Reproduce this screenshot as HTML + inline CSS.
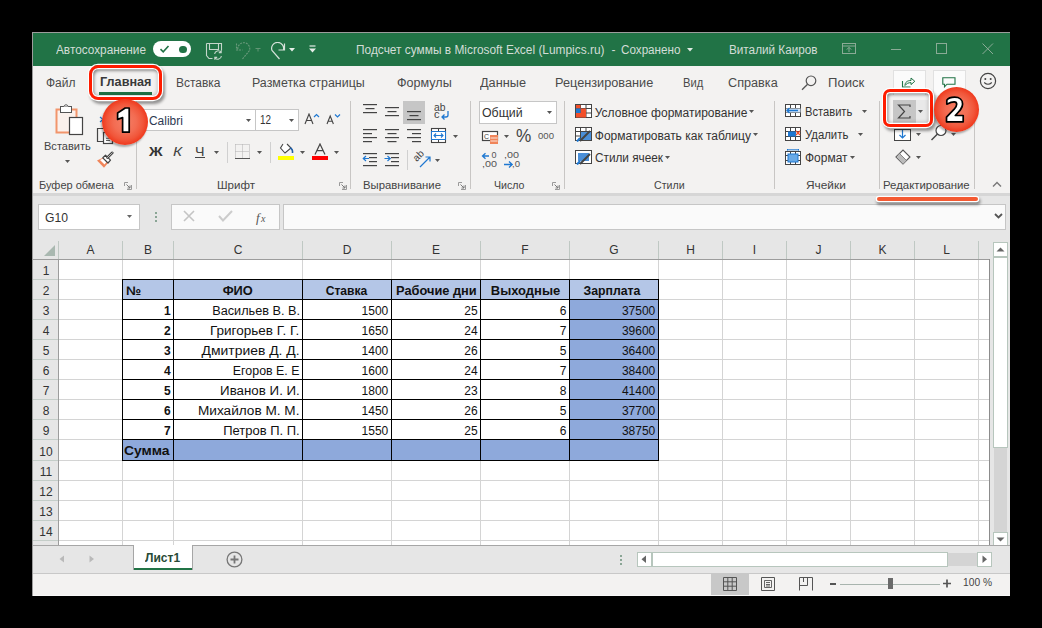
<!DOCTYPE html>
<html><head><meta charset="utf-8"><style>
html,body{margin:0;padding:0;width:1042px;height:628px;overflow:hidden;background:#000;font-family:"Liberation Sans", sans-serif;}
</style></head><body>
<div style="position:relative;width:1042px;height:628px;overflow:hidden;">
<div style="position:absolute;left:32px;top:32px;width:978px;height:564px;background:#9c9c9c;"></div>
<div style="position:absolute;left:33px;top:33px;width:977px;height:34px;background:#217346;"></div>
<div style="position:absolute;left:33px;top:66px;width:977px;height:127px;background:#f3f2f1;"></div>
<div style="position:absolute;left:33px;top:193px;width:977px;height:48px;background:#e6e6e6;"></div>
<div style="position:absolute;left:33px;top:193px;width:977px;height:3px;background:#d6d6d6;"></div>
<div style="position:absolute;left:33px;top:241px;width:977px;height:304px;background:#e6e6e6;"></div>
<div style="position:absolute;left:33px;top:545px;width:977px;height:28px;background:#e6e6e6;"></div>
<div style="position:absolute;left:33px;top:573px;width:977px;height:23px;background:#f3f2f1;"></div>
<div style="position:absolute;left:33px;top:595px;width:977px;height:1px;background:#f8f8f8;"></div>
<span style="position:absolute;left:56.00px;top:43.84px;font-size:12px;line-height:12px;font-weight:400;color:#d3ddd7;white-space:pre;transform:scaleX(0.9838);transform-origin:left;">Автосохранение</span>
<div style="position:absolute;left:153px;top:41px;width:38px;height:16px;background:#fff;border-radius:8px;"></div>
<svg style="position:absolute;left:159px;top:44px;" width="11" height="10" viewBox="0 0 11 10"><path d="M1.5 5.2 L4.2 7.8 L9.5 2" stroke="#217346" stroke-width="1.6" fill="none"/></svg>
<div style="position:absolute;left:179px;top:45.5px;width:7.5px;height:7.5px;background:#217346;border-radius:50%;"></div>
<svg style="position:absolute;left:205px;top:42px;" width="18" height="18" viewBox="0 0 18 18"><path d="M1.5 1.5 H16.5 V8.5 M1.5 1.5 V13.5 L4 16.5 H7.5" stroke="#c5d6cb" stroke-width="1.1" fill="none"/><path d="M4.5 1.5 V7.5 H13.5 V1.5" stroke="#c5d6cb" stroke-width="1.1" fill="none"/><path d="M9.6 12 A3.6 3.6 0 0 1 16 10.2 M16.4 14 A3.6 3.6 0 0 1 10 15.8 M16.2 8.2 V10.6 H13.8 M9.8 17.8 V15.4 H12.2" stroke="#c5d6cb" stroke-width="1.1" fill="none"/></svg>
<svg style="position:absolute;left:234px;top:42px;" width="18" height="18" viewBox="0 0 18 18"><path d="M8.5 17 L15.5 8.5 A6 6 0 1 0 4 8.3 M2.5 1.5 V8 H8.5" stroke="#6a9a7c" stroke-width="1.1" fill="none" stroke-dasharray="2 1"/></svg>
<svg style="position:absolute;left:255px;top:47.5px;" width="6" height="4" viewBox="0 0 6 4"><path d="M0.5 0.5 H5.5 M3 0.5 V3.5" stroke="#6a9a7c" stroke-width="0.9"/></svg>
<svg style="position:absolute;left:269px;top:42px;" width="18" height="18" viewBox="0 0 18 18"><path d="M10.5 17 L3 8.5 A6 6 0 1 1 14.3 8.3 M15.5 1.5 V8 H9.5" stroke="#d6e2da" stroke-width="1.2" fill="none"/></svg>
<svg style="position:absolute;left:289px;top:48px;" width="7" height="4" viewBox="0 0 7 4"><path d="M0 0 H6 L3 3.5 Z" fill="#e6eee9"/></svg>
<svg style="position:absolute;left:309px;top:45px;" width="7" height="8" viewBox="0 0 7 8"><path d="M0.5 1 H6.5" stroke="#e6eee9" stroke-width="1.2"/><path d="M0 3.5 H7 L3.5 7.5 Z" fill="#e6eee9"/></svg>
<span style="position:absolute;left:355.50px;top:43.84px;font-size:12px;line-height:12px;font-weight:400;color:#d3ddd7;white-space:pre;transform:scaleX(0.9913);transform-origin:left;">Подсчет суммы в Microsoft Excel (Lumpics.ru)</span>
<span style="position:absolute;left:611.50px;top:43.84px;font-size:12px;line-height:12px;font-weight:400;color:#d3ddd7;white-space:pre;">-</span>
<span style="position:absolute;left:621.00px;top:43.84px;font-size:12px;line-height:12px;font-weight:400;color:#d3ddd7;white-space:pre;transform:scaleX(0.9729);transform-origin:left;">Сохранено</span>
<svg style="position:absolute;left:687px;top:48px;" width="7" height="4" viewBox="0 0 7 4"><path d="M0 0 H6 L3 3.5 Z" fill="#dfeae3"/></svg>
<span style="position:absolute;left:728.50px;top:43.84px;font-size:12px;line-height:12px;font-weight:400;color:#d3ddd7;white-space:pre;transform:scaleX(0.9771);transform-origin:left;">Виталий Каиров</span>
<svg style="position:absolute;left:842px;top:43px;" width="15" height="12" viewBox="0 0 15 12"><rect x="0.5" y="0.5" width="13" height="10" stroke="#8aab96" fill="none"/><path d="M0.5 3 H13.5" stroke="#8aab96"/><path d="M7 9 V4.5 M4.8 6.6 L7 4.3 L9.2 6.6" stroke="#8aab96" fill="none"/></svg>
<div style="position:absolute;left:891px;top:49px;width:10px;height:1px;background:#8aab96;"></div>
<svg style="position:absolute;left:936px;top:43px;" width="12" height="12" viewBox="0 0 12 12"><rect x="0.5" y="0.5" width="10" height="10" stroke="#8aab96" fill="none"/></svg>
<svg style="position:absolute;left:982px;top:43px;" width="12" height="12" viewBox="0 0 12 12"><path d="M0.5 0.5 L11 11 M11 0.5 L0.5 11" stroke="#8aab96" stroke-width="1"/></svg>
<span style="position:absolute;left:45.50px;top:76.62px;font-size:12.5px;line-height:12.5px;font-weight:400;color:#4a4a4a;white-space:pre;transform:scaleX(0.9598);transform-origin:left;">Файл</span>
<span style="position:absolute;left:99.50px;top:76.42px;font-size:12.5px;line-height:12.5px;font-weight:700;color:#3a3a3a;white-space:pre;transform:scaleX(1.0129);transform-origin:left;">Главная</span>
<div style="position:absolute;left:99px;top:92px;width:53px;height:3px;background:#217346;"></div>
<span style="position:absolute;left:176.00px;top:76.62px;font-size:12.5px;line-height:12.5px;font-weight:400;color:#4a4a4a;white-space:pre;transform:scaleX(0.9576);transform-origin:left;">Вставка</span>
<span style="position:absolute;left:251.50px;top:76.62px;font-size:12.5px;line-height:12.5px;font-weight:400;color:#4a4a4a;white-space:pre;transform:scaleX(0.9938);transform-origin:left;">Разметка страницы</span>
<span style="position:absolute;left:396.50px;top:76.62px;font-size:12.5px;line-height:12.5px;font-weight:400;color:#4a4a4a;white-space:pre;transform:scaleX(1.0054);transform-origin:left;">Формулы</span>
<span style="position:absolute;left:479.80px;top:76.62px;font-size:12.5px;line-height:12.5px;font-weight:400;color:#4a4a4a;white-space:pre;transform:scaleX(1.0183);transform-origin:left;">Данные</span>
<span style="position:absolute;left:555.40px;top:76.62px;font-size:12.5px;line-height:12.5px;font-weight:400;color:#4a4a4a;white-space:pre;transform:scaleX(1.0183);transform-origin:left;">Рецензирование</span>
<span style="position:absolute;left:682.50px;top:76.62px;font-size:12.5px;line-height:12.5px;font-weight:400;color:#4a4a4a;white-space:pre;transform:scaleX(0.8972);transform-origin:left;">Вид</span>
<span style="position:absolute;left:728.00px;top:76.62px;font-size:12.5px;line-height:12.5px;font-weight:400;color:#4a4a4a;white-space:pre;transform:scaleX(1.0133);transform-origin:left;">Справка</span>
<svg style="position:absolute;left:801px;top:75px;" width="16" height="16" viewBox="0 0 16 16"><circle cx="10" cy="5.8" r="4.8" stroke="#555" stroke-width="1.2" fill="none"/><path d="M6.6 9.2 L1 14.8" stroke="#555" stroke-width="1.3"/></svg>
<span style="position:absolute;left:828.00px;top:76.62px;font-size:12.5px;line-height:12.5px;font-weight:400;color:#4a4a4a;white-space:pre;transform:scaleX(1.0479);transform-origin:left;">Поиск</span>
<div style="position:absolute;left:893px;top:70px;width:31px;height:24px;background:#fbfbfb;border:1px solid #e1e1e1;border-bottom:none;"></div>
<svg style="position:absolute;left:901px;top:76px;" width="15" height="12" viewBox="0 0 15 12"><path d="M1.5 5 V11 H9.5" stroke="#217346" stroke-width="1.1" fill="none"/><path d="M4 9.5 C4 6 6.5 4.5 10 4.5 V2 L13.8 5.3 L10 8.6 V6.6 C7.5 6.6 5.5 7.5 4 9.5Z" stroke="#217346" stroke-width="1" fill="none"/></svg>
<div style="position:absolute;left:933px;top:70px;width:31px;height:24px;background:#fbfbfb;border:1px solid #e1e1e1;border-bottom:none;"></div>
<svg style="position:absolute;left:942px;top:77px;" width="14" height="11" viewBox="0 0 14 11"><path d="M0.8 0.8 H13 V7.2 H5 L2.5 9.8 V7.2 H0.8 Z" stroke="#217346" stroke-width="1.1" fill="none"/></svg>
<svg style="position:absolute;left:979px;top:72px;" width="18" height="18" viewBox="0 0 18 18"><circle cx="9" cy="9" r="7.6" stroke="#444" stroke-width="1.2" fill="none"/><circle cx="6.3" cy="7" r="1" fill="#444"/><circle cx="11.7" cy="7" r="1" fill="#444"/><path d="M5.2 10.5 Q9 14 12.8 10.5" stroke="#444" stroke-width="1.1" fill="none"/></svg>
<div style="position:absolute;left:136px;top:101px;width:1px;height:88px;background:#c8c6c4;"></div>
<div style="position:absolute;left:350px;top:101px;width:1px;height:88px;background:#c8c6c4;"></div>
<div style="position:absolute;left:470px;top:101px;width:1px;height:88px;background:#c8c6c4;"></div>
<div style="position:absolute;left:564px;top:101px;width:1px;height:88px;background:#c8c6c4;"></div>
<div style="position:absolute;left:774px;top:101px;width:1px;height:88px;background:#c8c6c4;"></div>
<div style="position:absolute;left:879px;top:101px;width:1px;height:88px;background:#c8c6c4;"></div>
<div style="position:absolute;left:974px;top:101px;width:1px;height:88px;background:#c8c6c4;"></div>
<span style="position:absolute;left:39.00px;top:179.69px;font-size:11px;line-height:11px;font-weight:400;color:#444;white-space:pre;">Буфер обмена</span>
<span style="position:absolute;left:217.00px;top:179.69px;font-size:11px;line-height:11px;font-weight:400;color:#444;white-space:pre;transform:scaleX(1.0496);transform-origin:left;">Шрифт</span>
<span style="position:absolute;left:363.00px;top:179.69px;font-size:11px;line-height:11px;font-weight:400;color:#444;white-space:pre;transform:scaleX(1.0301);transform-origin:left;">Выравнивание</span>
<span style="position:absolute;left:494.00px;top:179.69px;font-size:11px;line-height:11px;font-weight:400;color:#444;white-space:pre;transform:scaleX(0.9640);transform-origin:left;">Число</span>
<span style="position:absolute;left:654.00px;top:179.69px;font-size:11px;line-height:11px;font-weight:400;color:#444;white-space:pre;transform:scaleX(0.9652);transform-origin:left;">Стили</span>
<span style="position:absolute;left:805.70px;top:179.69px;font-size:11px;line-height:11px;font-weight:400;color:#444;white-space:pre;transform:scaleX(1.0784);transform-origin:left;">Ячейки</span>
<span style="position:absolute;left:883.30px;top:179.69px;font-size:11px;line-height:11px;font-weight:400;color:#444;white-space:pre;transform:scaleX(1.0346);transform-origin:left;">Редактирование</span>
<svg style="position:absolute;left:124px;top:182px;" width="8" height="8" viewBox="0 0 8 8"><path d="M7.5 3 V7.5 H3 M0.5 4 V0.5 H4" stroke="#9a9a9a" stroke-width="1" fill="none"/><path d="M2.5 2.5 L6 6 M6 3.5 V6 H3.5" stroke="#7a7a7a" stroke-width="1" fill="none"/></svg>
<svg style="position:absolute;left:339px;top:182px;" width="8" height="8" viewBox="0 0 8 8"><path d="M7.5 3 V7.5 H3 M0.5 4 V0.5 H4" stroke="#9a9a9a" stroke-width="1" fill="none"/><path d="M2.5 2.5 L6 6 M6 3.5 V6 H3.5" stroke="#7a7a7a" stroke-width="1" fill="none"/></svg>
<svg style="position:absolute;left:458px;top:182px;" width="8" height="8" viewBox="0 0 8 8"><path d="M7.5 3 V7.5 H3 M0.5 4 V0.5 H4" stroke="#9a9a9a" stroke-width="1" fill="none"/><path d="M2.5 2.5 L6 6 M6 3.5 V6 H3.5" stroke="#7a7a7a" stroke-width="1" fill="none"/></svg>
<svg style="position:absolute;left:552px;top:182px;" width="8" height="8" viewBox="0 0 8 8"><path d="M7.5 3 V7.5 H3 M0.5 4 V0.5 H4" stroke="#9a9a9a" stroke-width="1" fill="none"/><path d="M2.5 2.5 L6 6 M6 3.5 V6 H3.5" stroke="#7a7a7a" stroke-width="1" fill="none"/></svg>
<svg style="position:absolute;left:992px;top:181px;" width="10" height="7" viewBox="0 0 10 7"><path d="M1 5.5 L5 1.5 L9 5.5" stroke="#777" stroke-width="1.4" fill="none"/></svg>
<svg style="position:absolute;left:55px;top:104px;" width="30" height="32" viewBox="0 0 30 32">
<rect x="1.5" y="5.5" width="20" height="23" fill="#fbf1ec" stroke="#f2956c" stroke-width="2"/>
<rect x="5.5" y="2.5" width="11" height="6" fill="#fff" stroke="#555" stroke-width="1"/>
<path d="M8.5 2.5 Q11 -1 13.5 2.5" stroke="#555" stroke-width="1" fill="#fff"/>
<rect x="14.5" y="13.5" width="13" height="17" fill="#fff" stroke="#444" stroke-width="1.2"/>
</svg>
<span style="position:absolute;left:43.80px;top:140.67px;font-size:11.5px;line-height:11.5px;font-weight:400;color:#444;white-space:pre;transform:scaleX(0.9600);transform-origin:left;">Вставить</span>
<svg style="position:absolute;left:65px;top:160px;" width="6" height="4" viewBox="0 0 6 4"><path d="M0 0 H5 L2.5 3 Z" fill="#555"/></svg>
<svg style="position:absolute;left:96px;top:114px;" width="22" height="32" viewBox="0 0 22 32">
<path d="M4 3 L10 8 M10 3 L4 8" stroke="#1f78d1" stroke-width="1.2"/>
<path d="M7.5 27.5 H1.5 V14.5 H8" stroke="#444" stroke-width="1.2" fill="none"/>
<rect x="7.5" y="18.5" width="9" height="11" fill="#fff" stroke="#444" stroke-width="1.2"/>
<path d="M10 24.3 H14 M10 26.5 H14" stroke="#555" stroke-width="0.9"/>
</svg>
<svg style="position:absolute;left:96px;top:151px;" width="18" height="18" viewBox="0 0 18 18">
<path d="M1 9.5 L6.8 6.8 L12 12 L8 16.8 Z" fill="#f0855a"/>
<path d="M4 9 L7 7.5 L10.5 11 L8.5 13.5 Z" fill="#fff"/>
<path d="M6.8 6.8 L9.5 4.2 L14.5 9.2 L12 12 Z" fill="#fff" stroke="#444" stroke-width="1.2" stroke-linejoin="round"/>
<path d="M11.5 6.5 L16.3 1.8" stroke="#444" stroke-width="2.6" stroke-linecap="round"/>
<path d="M11.5 6.5 L16.3 1.8" stroke="#f3f2f1" stroke-width="0.7" stroke-linecap="round"/>
</svg>
<div style="position:absolute;left:141px;top:109px;width:115px;height:22px;background:#fff;border:1px solid #c6c6c6;box-sizing:border-box;"></div>
<div style="position:absolute;left:255px;top:109px;width:44px;height:22px;background:#fff;border:1px solid #c6c6c6;box-sizing:border-box;"></div>
<span style="position:absolute;left:148.50px;top:114.64px;font-size:12px;line-height:12px;font-weight:400;color:#2d3a52;white-space:pre;transform:scaleX(0.9937);transform-origin:left;">Calibri</span>
<svg style="position:absolute;left:246px;top:119px;" width="6" height="4" viewBox="0 0 6 4"><path d="M0 0 H5 L2.5 3 Z" fill="#555"/></svg>
<span style="position:absolute;left:260.00px;top:114.44px;font-size:12px;line-height:12px;font-weight:400;color:#333;white-space:pre;transform:scaleX(0.8234);transform-origin:left;">12</span>
<svg style="position:absolute;left:289px;top:119px;" width="6" height="4" viewBox="0 0 6 4"><path d="M0 0 H5 L2.5 3 Z" fill="#555"/></svg>
<svg style="position:absolute;left:304px;top:113px;" width="20" height="12" viewBox="0 0 20 12"><path d="M1 11 L5 1 L9 11 M2.6 7.5 H7.4" stroke="#444" stroke-width="1.1" fill="none"/><path d="M10 4 L12.5 1.5 L15 4" stroke="#1f78d1" stroke-width="1.2" fill="none"/></svg>
<svg style="position:absolute;left:326px;top:113px;" width="18" height="12" viewBox="0 0 18 12"><path d="M1 11 L4.2 3 L7.4 11 M2.3 8.2 H6.1" stroke="#444" stroke-width="1.1" fill="none"/><path d="M9 1.5 L11.5 4 L14 1.5" stroke="#1f78d1" stroke-width="1.2" fill="none"/></svg>
<span style="position:absolute;left:149.00px;top:144.57px;font-size:13.5px;line-height:13.5px;font-weight:700;color:#333;white-space:pre;transform:scaleX(1.1145);transform-origin:left;">Ж</span>
<span style="position:absolute;left:173.30px;top:145.00px;font-size:13px;line-height:13px;font-weight:400;color:#444;white-space:pre;transform:scaleX(1.1876);transform-origin:left;font-style:italic;">К</span>
<span style="position:absolute;left:195.40px;top:145.00px;font-size:13px;line-height:13px;font-weight:400;color:#444;white-space:pre;transform:scaleX(1.0955);transform-origin:left;">Ч</span>
<div style="position:absolute;left:195px;top:157px;width:10px;height:1px;background:#444;"></div>
<svg style="position:absolute;left:214px;top:151px;" width="6" height="4" viewBox="0 0 6 4"><path d="M0 0 H5 L2.5 3 Z" fill="#555"/></svg>
<div style="position:absolute;left:227px;top:142px;width:1px;height:21px;background:#d0d0d0;"></div>
<svg style="position:absolute;left:235px;top:144px;" width="15" height="15" viewBox="0 0 15 15"><path d="M0.5 0.5 H14.5 V14.5 M0.5 0.5 V14.5 M7.5 0.5 V14 M0.5 7.5 H14.5" stroke="#b0b0b0" stroke-width="1" stroke-dasharray="1 1" fill="none"/><path d="M0 14.5 H15" stroke="#555" stroke-width="1"/></svg>
<svg style="position:absolute;left:257px;top:151px;" width="6" height="4" viewBox="0 0 6 4"><path d="M0 0 H5 L2.5 3 Z" fill="#555"/></svg>
<div style="position:absolute;left:270px;top:142px;width:1px;height:21px;background:#d0d0d0;"></div>
<svg style="position:absolute;left:279px;top:143px;" width="16" height="12" viewBox="0 0 16 12"><path d="M4 1 L1.5 5 L6 10 L12 5 L8 1" stroke="#444" stroke-width="1.1" fill="#fff"/><path d="M11 5 Q14 6 13.5 10" stroke="#1f5fa8" stroke-width="1.6" fill="none"/></svg>
<div style="position:absolute;left:278px;top:156px;width:16px;height:4px;background:#ffff00;"></div>
<svg style="position:absolute;left:300px;top:151px;" width="6" height="4" viewBox="0 0 6 4"><path d="M0 0 H5 L2.5 3 Z" fill="#555"/></svg>
<svg style="position:absolute;left:314px;top:143px;" width="12" height="12" viewBox="0 0 12 12"><path d="M1 11.5 L6 1 L11 11.5 M2.8 7.6 H9.2" stroke="#444" stroke-width="1.2" fill="none"/></svg>
<div style="position:absolute;left:312px;top:156px;width:16px;height:4px;background:#ff0000;"></div>
<svg style="position:absolute;left:334px;top:151px;" width="6" height="4" viewBox="0 0 6 4"><path d="M0 0 H5 L2.5 3 Z" fill="#555"/></svg>
<div style="position:absolute;left:403px;top:101px;width:22px;height:23px;background:#c6c6c6;"></div>
<svg style="position:absolute;left:363px;top:0px;" width="16" height="200" viewBox="0 0 16 200"><rect x="0" y="104" width="14" height="1.2" fill="#444"/><rect x="2.5" y="108" width="9" height="1.2" fill="#444"/><rect x="0" y="112" width="14" height="1.2" fill="#444"/></svg>
<svg style="position:absolute;left:385px;top:0px;" width="16" height="200" viewBox="0 0 16 200"><rect x="0" y="107" width="14" height="1.2" fill="#444"/><rect x="2.5" y="111" width="9" height="1.2" fill="#444"/><rect x="0" y="115" width="14" height="1.2" fill="#444"/></svg>
<svg style="position:absolute;left:407px;top:0px;" width="16" height="200" viewBox="0 0 16 200"><rect x="0" y="111" width="14" height="1.2" fill="#444"/><rect x="2.5" y="115" width="9" height="1.2" fill="#444"/><rect x="0" y="119" width="14" height="1.2" fill="#444"/></svg>
<span style="position:absolute;left:433.60px;top:103.33px;font-size:10px;line-height:10px;font-weight:400;color:#444;white-space:pre;transform:scaleX(1.0337);transform-origin:left;">ab</span>
<span style="position:absolute;left:434.00px;top:110.03px;font-size:10px;line-height:10px;font-weight:400;color:#444;white-space:pre;transform:scaleX(1.1000);transform-origin:left;">c</span>
<svg style="position:absolute;left:440px;top:110px;" width="10" height="10" viewBox="0 0 10 10"><path d="M8 1 V5 Q8 7 6 7 H2 M4.5 4.5 L2 7 L4.5 9.5" stroke="#1f78d1" stroke-width="1.3" fill="none"/></svg>
<svg style="position:absolute;left:363px;top:0px;" width="16" height="200" viewBox="0 0 16 200"><rect x="0" y="129" width="14" height="1.2" fill="#444"/><rect x="0" y="133" width="9" height="1.2" fill="#444"/><rect x="0" y="137" width="14" height="1.2" fill="#444"/><rect x="0" y="141" width="9" height="1.2" fill="#444"/></svg>
<svg style="position:absolute;left:385px;top:0px;" width="16" height="200" viewBox="0 0 16 200"><rect x="0" y="129" width="14" height="1.2" fill="#444"/><rect x="2.5" y="133" width="9" height="1.2" fill="#444"/><rect x="0" y="137" width="14" height="1.2" fill="#444"/><rect x="2.5" y="141" width="9" height="1.2" fill="#444"/></svg>
<svg style="position:absolute;left:407px;top:0px;" width="16" height="200" viewBox="0 0 16 200"><rect x="0" y="129" width="14" height="1.2" fill="#444"/><rect x="5" y="133" width="9" height="1.2" fill="#444"/><rect x="0" y="137" width="14" height="1.2" fill="#444"/><rect x="5" y="141" width="9" height="1.2" fill="#444"/></svg>
<svg style="position:absolute;left:430px;top:127px;" width="17" height="17" viewBox="0 0 17 17"><rect x="1.5" y="1.5" width="14" height="14" fill="#fff" stroke="#444" stroke-width="1.1"/><path d="M1.5 4.5 H15.5 M1.5 12.5 H15.5 M8.5 1.5 V4.5 M8.5 12.5 V15.5" stroke="#444" stroke-width="1"/><rect x="1.5" y="4.5" width="14" height="8" fill="#fff" stroke="#1f78d1" stroke-width="1"/><path d="M4 8.5 H13 M6 6.5 L4 8.5 L6 10.5 M11 6.5 L13 8.5 L11 10.5" stroke="#1f78d1" stroke-width="1.1" fill="none"/></svg>
<svg style="position:absolute;left:453px;top:135px;" width="6" height="4" viewBox="0 0 6 4"><path d="M0 0 H5 L2.5 3 Z" fill="#555"/></svg>
<svg style="position:absolute;left:363px;top:0px;" width="16" height="200" viewBox="0 0 16 200"><rect x="0" y="153" width="14" height="1.2" fill="#444"/><rect x="6" y="157" width="8" height="1.2" fill="#444"/><rect x="6" y="161" width="8" height="1.2" fill="#444"/><rect x="0" y="165" width="14" height="1.2" fill="#444"/></svg>
<svg style="position:absolute;left:385px;top:0px;" width="16" height="200" viewBox="0 0 16 200"><rect x="0" y="153" width="14" height="1.2" fill="#444"/><rect x="6" y="157" width="8" height="1.2" fill="#444"/><rect x="6" y="161" width="8" height="1.2" fill="#444"/><rect x="0" y="165" width="14" height="1.2" fill="#444"/></svg>
<svg style="position:absolute;left:362px;top:155px;" width="8" height="7" viewBox="0 0 8 7"><path d="M7 3.5 H1.5 M4 1 L1.3 3.5 L4 6" stroke="#1f78d1" stroke-width="1.2" fill="none"/></svg>
<svg style="position:absolute;left:384px;top:155px;" width="8" height="7" viewBox="0 0 8 7"><path d="M0.5 3.5 H6 M3.5 1 L6.2 3.5 L3.5 6" stroke="#1f78d1" stroke-width="1.2" fill="none"/></svg>
<div style="position:absolute;left:407px;top:150px;width:1px;height:20px;background:#d0d0d0;"></div>
<span style="position:absolute;left:413px;top:151px;font-size:10px;line-height:10px;color:#444;transform:rotate(-45deg);transform-origin:50% 50%;">ab</span>
<svg style="position:absolute;left:419px;top:155px;" width="13" height="13" viewBox="0 0 13 13"><path d="M1 12 L11 2 M6.5 2 H11 V6.5" stroke="#1f78d1" stroke-width="1.2" fill="none"/></svg>
<svg style="position:absolute;left:435px;top:159px;" width="6" height="4" viewBox="0 0 6 4"><path d="M0 0 H5 L2.5 3 Z" fill="#555"/></svg>
<div style="position:absolute;left:479px;top:101px;width:78px;height:23px;background:#fff;border:1px solid #c6c6c6;box-sizing:border-box;"></div>
<span style="position:absolute;left:482.40px;top:106.82px;font-size:12.5px;line-height:12.5px;font-weight:400;color:#333;white-space:pre;transform:scaleX(0.9869);transform-origin:left;">Общий</span>
<svg style="position:absolute;left:547px;top:111px;" width="6" height="4" viewBox="0 0 6 4"><path d="M0 0 H5 L2.5 3 Z" fill="#555"/></svg>
<svg style="position:absolute;left:481px;top:130px;" width="18" height="15" viewBox="0 0 18 15"><rect x="1.5" y="1.5" width="15" height="9" fill="#fff" stroke="#444" stroke-width="1.2"/><text x="3" y="9" font-size="7" font-family="Liberation Sans" fill="#444">C</text><rect x="9" y="5" width="8" height="9" fill="#f0855a"/><path d="M9.5 8 H16.5 M9.5 11 H16.5" stroke="#fff" stroke-width="0.8"/></svg>
<svg style="position:absolute;left:504px;top:135px;" width="6" height="4" viewBox="0 0 6 4"><path d="M0 0 H5 L2.5 3 Z" fill="#555"/></svg>
<span style="position:absolute;left:516.40px;top:127.46px;font-size:18px;line-height:18px;font-weight:400;color:#444;white-space:pre;transform:scaleX(0.9553);transform-origin:left;">%</span>
<span style="position:absolute;left:537.70px;top:131.26px;font-size:9.5px;line-height:9.5px;font-weight:400;color:#555;white-space:pre;transform:scaleX(1.0089);transform-origin:left;">000</span>
<svg style="position:absolute;left:481px;top:151px;" width="18" height="18" viewBox="0 0 18 18"><path d="M8 5 H1.8 M4.5 2.2 L1.5 5 L4.5 7.8" stroke="#1f78d1" stroke-width="1.3" fill="none"/></svg>
<span style="position:absolute;left:491.50px;top:151.38px;font-size:9px;line-height:9px;font-weight:400;color:#555;white-space:pre;">0</span>
<span style="position:absolute;left:482.00px;top:159.88px;font-size:9px;line-height:9px;font-weight:400;color:#555;white-space:pre;transform:scaleX(1.1985);transform-origin:left;">,00</span>
<span style="position:absolute;left:504.00px;top:151.38px;font-size:9px;line-height:9px;font-weight:400;color:#555;white-space:pre;transform:scaleX(1.1985);transform-origin:left;">,00</span>
<svg style="position:absolute;left:503px;top:160px;" width="18" height="9" viewBox="0 0 18 9"><path d="M1 4.5 H9 M6 1.5 L9.2 4.5 L6 7.5" stroke="#1f78d1" stroke-width="1.3" fill="none"/></svg>
<span style="position:absolute;left:511.50px;top:159.88px;font-size:9px;line-height:9px;font-weight:400;color:#555;white-space:pre;transform:scaleX(1.0644);transform-origin:left;">,0</span>
<svg style="position:absolute;left:575px;top:104px;" width="17" height="14" viewBox="0 0 17 14"><rect x="0.5" y="0.5" width="16" height="13" fill="#fff" stroke="#444"/><path d="M0.5 4.5 H16.5 M0.5 9 H16.5 M5.5 0.5 V13.5 M11 0.5 V13.5" stroke="#444"/><rect x="1" y="1" width="4.5" height="3.5" fill="#f2502a"/><rect x="5.5" y="4.5" width="5.5" height="4.5" fill="#f2502a"/><rect x="1" y="9" width="10" height="4.5" fill="#f2502a"/><rect x="1" y="4.5" width="4.5" height="4.5" fill="#1f78d1"/></svg>
<span style="position:absolute;left:594.80px;top:106.54px;font-size:12px;line-height:12px;font-weight:400;color:#333;white-space:pre;">Условное форматирование</span>
<svg style="position:absolute;left:749px;top:110px;" width="6" height="4" viewBox="0 0 6 4"><path d="M0 0 H5 L2.5 3 Z" fill="#555"/></svg>
<svg style="position:absolute;left:575px;top:127px;" width="17" height="15" viewBox="0 0 17 15"><rect x="0.5" y="0.5" width="16" height="13" fill="#fff" stroke="#444"/><path d="M0.5 4.5 H16.5 M0.5 9 H16.5 M5.5 0.5 V13.5 M11 0.5 V13.5" stroke="#444"/><rect x="6" y="5" width="10" height="8" fill="#4a8fd8"/><path d="M5 14 L15 4" stroke="#444" stroke-width="2"/><path d="M2 14.5 L5 11" stroke="#1f78d1" stroke-width="2"/></svg>
<span style="position:absolute;left:594.80px;top:129.84px;font-size:12px;line-height:12px;font-weight:400;color:#333;white-space:pre;">Форматировать как таблицу</span>
<svg style="position:absolute;left:753px;top:133px;" width="6" height="4" viewBox="0 0 6 4"><path d="M0 0 H5 L2.5 3 Z" fill="#555"/></svg>
<svg style="position:absolute;left:575px;top:150px;" width="17" height="15" viewBox="0 0 17 15"><rect x="0.5" y="0.5" width="16" height="13" fill="#fff" stroke="#444"/><rect x="3" y="3" width="11" height="8" fill="#4a8fd8"/><path d="M5 14 L15 4" stroke="#444" stroke-width="2"/><path d="M2 14.5 L5 11" stroke="#1f78d1" stroke-width="2"/></svg>
<span style="position:absolute;left:594.80px;top:152.04px;font-size:12px;line-height:12px;font-weight:400;color:#333;white-space:pre;transform:scaleX(0.9817);transform-origin:left;">Стили ячеек</span>
<svg style="position:absolute;left:665px;top:156px;" width="6" height="4" viewBox="0 0 6 4"><path d="M0 0 H5 L2.5 3 Z" fill="#555"/></svg>
<svg style="position:absolute;left:785px;top:104px;" width="17" height="14" viewBox="0 0 17 14"><rect x="0.5" y="0.5" width="15" height="12" fill="#fff" stroke="#444"/><path d="M0.5 4.5 H15.5 M0.5 8.5 H15.5 M5.5 0.5 V12.5 M10.5 0.5 V12.5" stroke="#444"/><rect x="1" y="4.5" width="14.5" height="4" fill="#cfe3f7"/><path d="M13 6.5 H2 M4.5 4 L2 6.5 L4.5 9" stroke="#1f78d1" stroke-width="1.3" fill="none"/></svg>
<span style="position:absolute;left:804.50px;top:106.12px;font-size:12.5px;line-height:12.5px;font-weight:400;color:#333;white-space:pre;transform:scaleX(0.8925);transform-origin:left;">Вставить</span>
<svg style="position:absolute;left:862px;top:110px;" width="6" height="4" viewBox="0 0 6 4"><path d="M0 0 H5 L2.5 3 Z" fill="#555"/></svg>
<svg style="position:absolute;left:785px;top:127px;" width="17" height="15" viewBox="0 0 17 15"><rect x="0.5" y="0.5" width="15" height="13" fill="#fff" stroke="#444"/><path d="M0.5 4.5 H15.5 M0.5 9.5 H15.5 M5.5 0.5 V13.5 M10.5 0.5 V13.5" stroke="#444"/><rect x="3" y="4.5" width="8" height="5" fill="#1f78d1"/><path d="M11 4 L15 8 M15 4 L11 8" stroke="#f2502a" stroke-width="1.3"/></svg>
<span style="position:absolute;left:804.50px;top:129.42px;font-size:12.5px;line-height:12.5px;font-weight:400;color:#333;white-space:pre;transform:scaleX(0.9071);transform-origin:left;">Удалить</span>
<svg style="position:absolute;left:858px;top:133px;" width="6" height="4" viewBox="0 0 6 4"><path d="M0 0 H5 L2.5 3 Z" fill="#555"/></svg>
<svg style="position:absolute;left:785px;top:149px;" width="17" height="16" viewBox="0 0 17 16"><rect x="0.5" y="2.5" width="15" height="13" fill="#fff" stroke="#444"/><path d="M0.5 6.5 H15.5 M0.5 11.5 H15.5 M5.5 2.5 V15.5 M10.5 2.5 V15.5" stroke="#444"/><rect x="3" y="5" width="10" height="8" fill="#6aaae6" stroke="#1f78d1"/><path d="M2.5 0.8 H13.5 M2.5 0 V1.6 M13.5 0 V1.6" stroke="#1f78d1" stroke-width="1"/></svg>
<span style="position:absolute;left:804.50px;top:151.62px;font-size:12.5px;line-height:12.5px;font-weight:400;color:#333;white-space:pre;transform:scaleX(0.9571);transform-origin:left;">Формат</span>
<svg style="position:absolute;left:850px;top:156px;" width="6" height="4" viewBox="0 0 6 4"><path d="M0 0 H5 L2.5 3 Z" fill="#555"/></svg>
<svg style="position:absolute;left:894px;top:129px;" width="18" height="13" viewBox="0 0 18 13"><rect x="0.5" y="0.5" width="16" height="11" fill="#fff" stroke="#444"/><path d="M8.5 1 V9 M5.5 6 L8.5 9 L11.5 6" stroke="#1f78d1" stroke-width="1.2" fill="none"/></svg>
<svg style="position:absolute;left:916px;top:133px;" width="6" height="4" viewBox="0 0 6 4"><path d="M0 0 H5 L2.5 3 Z" fill="#555"/></svg>
<svg style="position:absolute;left:930px;top:124px;" width="18" height="18" viewBox="0 0 18 18"><circle cx="11" cy="6.5" r="5" stroke="#444" stroke-width="1.2" fill="#fff"/><path d="M7.5 10 L1.5 16" stroke="#444" stroke-width="1.5"/></svg>
<svg style="position:absolute;left:951px;top:133px;" width="6" height="4" viewBox="0 0 6 4"><path d="M0 0 H5 L2.5 3 Z" fill="#555"/></svg>
<svg style="position:absolute;left:895px;top:149px;" width="18" height="16" viewBox="0 0 18 16"><path d="M1 8 L8 1 L15 8 L8 15 Z" fill="#fff" stroke="#555" stroke-width="1.1"/><path d="M4.5 4.5 L11.5 11.5" stroke="#555"/><path d="M1.5 8 L4.5 4.5 L11.5 11.5 L8 15 Z" fill="#bbb"/></svg>
<svg style="position:absolute;left:916px;top:156px;" width="6" height="4" viewBox="0 0 6 4"><path d="M0 0 H5 L2.5 3 Z" fill="#555"/></svg>
<div style="position:absolute;left:38px;top:204px;width:102px;height:26px;background:#fff;border:1px solid #c6c6c6;box-sizing:border-box;"></div>
<span style="position:absolute;left:45.00px;top:211.20px;font-size:13px;line-height:13px;font-weight:400;color:#333;white-space:pre;transform:scaleX(0.9358);transform-origin:left;">G10</span>
<svg style="position:absolute;left:127px;top:215px;" width="6" height="4" viewBox="0 0 6 4"><path d="M0 0 H5 L2.5 3 Z" fill="#666"/></svg>
<div style="position:absolute;left:154.5px;top:212px;width:2px;height:2px;background:#8aa595;"></div>
<div style="position:absolute;left:154.5px;top:216px;width:2px;height:2px;background:#8aa595;"></div>
<div style="position:absolute;left:154.5px;top:220px;width:2px;height:2px;background:#8aa595;"></div>
<div style="position:absolute;left:171px;top:204px;width:109px;height:26px;background:#fafafa;border:1px solid #c6c6c6;box-sizing:border-box;"></div>
<svg style="position:absolute;left:183px;top:210px;" width="12" height="12" viewBox="0 0 12 12"><path d="M1 1 L11 11 M11 1 L1 11" stroke="#c4c4c4" stroke-width="1.6"/></svg>
<svg style="position:absolute;left:218px;top:210px;" width="15" height="12" viewBox="0 0 15 12"><path d="M1 6 L5 10.5 L14 1" stroke="#cccccc" stroke-width="2" fill="none"/></svg>
<span style="position:absolute;left:256.00px;top:211.00px;font-size:13px;line-height:13px;font-weight:400;color:#555;white-space:pre;font-style:italic;font-family:'Liberation Serif',serif;">f</span>
<span style="position:absolute;left:261.00px;top:213.53px;font-size:10px;line-height:10px;font-weight:400;color:#555;white-space:pre;font-style:italic;font-family:'Liberation Serif',serif;">x</span>
<div style="position:absolute;left:283px;top:204px;width:723px;height:26px;background:#fafafa;border:1px solid #c6c6c6;box-sizing:border-box;"></div>
<svg style="position:absolute;left:994px;top:213px;" width="9" height="6" viewBox="0 0 9 6"><path d="M1 1 L4.5 4.5 L8 1" stroke="#555" stroke-width="1.8" fill="none"/></svg>
<div style="position:absolute;left:33px;top:241px;width:957px;height:18px;background:#e6e6e6;"></div>
<div style="position:absolute;left:122px;top:241px;width:1px;height:18px;background:#bfc8c3;"></div>
<div style="position:absolute;left:173px;top:241px;width:1px;height:18px;background:#bfc8c3;"></div>
<div style="position:absolute;left:302px;top:241px;width:1px;height:18px;background:#bfc8c3;"></div>
<div style="position:absolute;left:391px;top:241px;width:1px;height:18px;background:#bfc8c3;"></div>
<div style="position:absolute;left:480px;top:241px;width:1px;height:18px;background:#bfc8c3;"></div>
<div style="position:absolute;left:569px;top:241px;width:1px;height:18px;background:#bfc8c3;"></div>
<div style="position:absolute;left:658px;top:241px;width:1px;height:18px;background:#bfc8c3;"></div>
<div style="position:absolute;left:722px;top:241px;width:1px;height:18px;background:#bfc8c3;"></div>
<div style="position:absolute;left:786px;top:241px;width:1px;height:18px;background:#bfc8c3;"></div>
<div style="position:absolute;left:850px;top:241px;width:1px;height:18px;background:#bfc8c3;"></div>
<div style="position:absolute;left:914px;top:241px;width:1px;height:18px;background:#bfc8c3;"></div>
<div style="position:absolute;left:978px;top:241px;width:1px;height:18px;background:#bfc8c3;"></div>
<div style="position:absolute;left:58px;top:241px;width:1px;height:18px;background:#bfc8c3;"></div>
<span style="position:absolute;left:86.49px;top:243.84px;font-size:12px;line-height:12px;font-weight:400;color:#333;white-space:pre;">A</span>
<span style="position:absolute;left:143.99px;top:243.84px;font-size:12px;line-height:12px;font-weight:400;color:#333;white-space:pre;">B</span>
<span style="position:absolute;left:233.66px;top:243.84px;font-size:12px;line-height:12px;font-weight:400;color:#333;white-space:pre;">C</span>
<span style="position:absolute;left:342.66px;top:243.84px;font-size:12px;line-height:12px;font-weight:400;color:#333;white-space:pre;">D</span>
<span style="position:absolute;left:431.99px;top:243.84px;font-size:12px;line-height:12px;font-weight:400;color:#333;white-space:pre;">E</span>
<span style="position:absolute;left:521.33px;top:243.84px;font-size:12px;line-height:12px;font-weight:400;color:#333;white-space:pre;">F</span>
<span style="position:absolute;left:609.33px;top:243.84px;font-size:12px;line-height:12px;font-weight:400;color:#333;white-space:pre;">G</span>
<span style="position:absolute;left:686.16px;top:243.84px;font-size:12px;line-height:12px;font-weight:400;color:#333;white-space:pre;">H</span>
<span style="position:absolute;left:752.83px;top:243.84px;font-size:12px;line-height:12px;font-weight:400;color:#333;white-space:pre;">I</span>
<span style="position:absolute;left:815.50px;top:243.84px;font-size:12px;line-height:12px;font-weight:400;color:#333;white-space:pre;">J</span>
<span style="position:absolute;left:878.49px;top:243.84px;font-size:12px;line-height:12px;font-weight:400;color:#333;white-space:pre;">K</span>
<span style="position:absolute;left:943.16px;top:243.84px;font-size:12px;line-height:12px;font-weight:400;color:#333;white-space:pre;">L</span>
<svg style="position:absolute;left:43px;top:244px;" width="13" height="13" viewBox="0 0 13 13"><path d="M12 1 V12 H1 Z" fill="#a9b8b0"/></svg>
<div style="position:absolute;left:33px;top:259px;width:957px;height:1px;background:#9c9c9c;"></div>
<div style="position:absolute;left:59px;top:260px;width:930px;height:285px;background:#fff;"></div>
<div style="position:absolute;left:33px;top:260px;width:25px;height:285px;background:#e6e6e6;"></div>
<div style="position:absolute;left:58px;top:259px;width:1px;height:286px;background:#9c9c9c;"></div>
<div style="position:absolute;left:33px;top:279px;width:25px;height:1px;background:#c4cdc8;"></div>
<div style="position:absolute;left:59px;top:279px;width:930px;height:1px;background:#d4d4d4;"></div>
<div style="position:absolute;left:33px;top:299px;width:25px;height:1px;background:#c4cdc8;"></div>
<div style="position:absolute;left:59px;top:299px;width:930px;height:1px;background:#d4d4d4;"></div>
<div style="position:absolute;left:33px;top:319px;width:25px;height:1px;background:#c4cdc8;"></div>
<div style="position:absolute;left:59px;top:319px;width:930px;height:1px;background:#d4d4d4;"></div>
<div style="position:absolute;left:33px;top:339px;width:25px;height:1px;background:#c4cdc8;"></div>
<div style="position:absolute;left:59px;top:339px;width:930px;height:1px;background:#d4d4d4;"></div>
<div style="position:absolute;left:33px;top:359px;width:25px;height:1px;background:#c4cdc8;"></div>
<div style="position:absolute;left:59px;top:359px;width:930px;height:1px;background:#d4d4d4;"></div>
<div style="position:absolute;left:33px;top:379px;width:25px;height:1px;background:#c4cdc8;"></div>
<div style="position:absolute;left:59px;top:379px;width:930px;height:1px;background:#d4d4d4;"></div>
<div style="position:absolute;left:33px;top:399px;width:25px;height:1px;background:#c4cdc8;"></div>
<div style="position:absolute;left:59px;top:399px;width:930px;height:1px;background:#d4d4d4;"></div>
<div style="position:absolute;left:33px;top:419px;width:25px;height:1px;background:#c4cdc8;"></div>
<div style="position:absolute;left:59px;top:419px;width:930px;height:1px;background:#d4d4d4;"></div>
<div style="position:absolute;left:33px;top:439px;width:25px;height:1px;background:#c4cdc8;"></div>
<div style="position:absolute;left:59px;top:439px;width:930px;height:1px;background:#d4d4d4;"></div>
<div style="position:absolute;left:33px;top:460px;width:25px;height:1px;background:#c4cdc8;"></div>
<div style="position:absolute;left:59px;top:460px;width:930px;height:1px;background:#d4d4d4;"></div>
<div style="position:absolute;left:33px;top:480px;width:25px;height:1px;background:#c4cdc8;"></div>
<div style="position:absolute;left:59px;top:480px;width:930px;height:1px;background:#d4d4d4;"></div>
<div style="position:absolute;left:33px;top:500px;width:25px;height:1px;background:#c4cdc8;"></div>
<div style="position:absolute;left:59px;top:500px;width:930px;height:1px;background:#d4d4d4;"></div>
<div style="position:absolute;left:33px;top:520px;width:25px;height:1px;background:#c4cdc8;"></div>
<div style="position:absolute;left:59px;top:520px;width:930px;height:1px;background:#d4d4d4;"></div>
<div style="position:absolute;left:33px;top:540px;width:25px;height:1px;background:#c4cdc8;"></div>
<div style="position:absolute;left:59px;top:540px;width:930px;height:1px;background:#d4d4d4;"></div>
<div style="position:absolute;left:122px;top:260px;width:1px;height:285px;background:#d4d4d4;"></div>
<div style="position:absolute;left:173px;top:260px;width:1px;height:285px;background:#d4d4d4;"></div>
<div style="position:absolute;left:302px;top:260px;width:1px;height:285px;background:#d4d4d4;"></div>
<div style="position:absolute;left:391px;top:260px;width:1px;height:285px;background:#d4d4d4;"></div>
<div style="position:absolute;left:480px;top:260px;width:1px;height:285px;background:#d4d4d4;"></div>
<div style="position:absolute;left:569px;top:260px;width:1px;height:285px;background:#d4d4d4;"></div>
<div style="position:absolute;left:658px;top:260px;width:1px;height:285px;background:#d4d4d4;"></div>
<div style="position:absolute;left:722px;top:260px;width:1px;height:285px;background:#d4d4d4;"></div>
<div style="position:absolute;left:786px;top:260px;width:1px;height:285px;background:#d4d4d4;"></div>
<div style="position:absolute;left:850px;top:260px;width:1px;height:285px;background:#d4d4d4;"></div>
<div style="position:absolute;left:914px;top:260px;width:1px;height:285px;background:#d4d4d4;"></div>
<div style="position:absolute;left:978px;top:260px;width:1px;height:285px;background:#d4d4d4;"></div>
<span style="position:absolute;left:42.66px;top:264.84px;font-size:12px;line-height:12px;font-weight:400;color:#333;white-space:pre;">1</span>
<span style="position:absolute;left:42.66px;top:284.84px;font-size:12px;line-height:12px;font-weight:400;color:#333;white-space:pre;">2</span>
<span style="position:absolute;left:42.66px;top:304.84px;font-size:12px;line-height:12px;font-weight:400;color:#333;white-space:pre;">3</span>
<span style="position:absolute;left:42.66px;top:324.84px;font-size:12px;line-height:12px;font-weight:400;color:#333;white-space:pre;">4</span>
<span style="position:absolute;left:42.66px;top:344.84px;font-size:12px;line-height:12px;font-weight:400;color:#333;white-space:pre;">5</span>
<span style="position:absolute;left:42.66px;top:364.84px;font-size:12px;line-height:12px;font-weight:400;color:#333;white-space:pre;">6</span>
<span style="position:absolute;left:42.66px;top:384.84px;font-size:12px;line-height:12px;font-weight:400;color:#333;white-space:pre;">7</span>
<span style="position:absolute;left:42.66px;top:404.84px;font-size:12px;line-height:12px;font-weight:400;color:#333;white-space:pre;">8</span>
<span style="position:absolute;left:42.66px;top:424.84px;font-size:12px;line-height:12px;font-weight:400;color:#333;white-space:pre;">9</span>
<span style="position:absolute;left:39.32px;top:445.84px;font-size:12px;line-height:12px;font-weight:400;color:#333;white-space:pre;">10</span>
<span style="position:absolute;left:39.77px;top:465.84px;font-size:12px;line-height:12px;font-weight:400;color:#333;white-space:pre;">11</span>
<span style="position:absolute;left:39.32px;top:485.84px;font-size:12px;line-height:12px;font-weight:400;color:#333;white-space:pre;">12</span>
<span style="position:absolute;left:39.32px;top:505.84px;font-size:12px;line-height:12px;font-weight:400;color:#333;white-space:pre;">13</span>
<span style="position:absolute;left:39.32px;top:525.84px;font-size:12px;line-height:12px;font-weight:400;color:#333;white-space:pre;">14</span>
<div style="position:absolute;left:989px;top:259px;width:1px;height:287px;background:#8c8c8c;"></div>
<div style="position:absolute;left:33px;top:545px;width:957px;height:1px;background:#8c8c8c;"></div>
<div style="position:absolute;left:123px;top:280px;width:535px;height:19px;background:#b4c6e7;"></div>
<div style="position:absolute;left:570px;top:300px;width:88px;height:19px;background:#8ea9db;"></div>
<div style="position:absolute;left:570px;top:320px;width:88px;height:19px;background:#8ea9db;"></div>
<div style="position:absolute;left:570px;top:340px;width:88px;height:19px;background:#8ea9db;"></div>
<div style="position:absolute;left:570px;top:360px;width:88px;height:19px;background:#8ea9db;"></div>
<div style="position:absolute;left:570px;top:380px;width:88px;height:19px;background:#8ea9db;"></div>
<div style="position:absolute;left:570px;top:400px;width:88px;height:19px;background:#8ea9db;"></div>
<div style="position:absolute;left:570px;top:420px;width:88px;height:19px;background:#8ea9db;"></div>
<div style="position:absolute;left:123px;top:440px;width:535px;height:20px;background:#8ea9db;"></div>
<div style="position:absolute;left:122px;top:279px;width:1px;height:182px;background:#000;"></div>
<div style="position:absolute;left:173px;top:279px;width:1px;height:182px;background:#000;"></div>
<div style="position:absolute;left:302px;top:279px;width:1px;height:182px;background:#000;"></div>
<div style="position:absolute;left:391px;top:279px;width:1px;height:182px;background:#000;"></div>
<div style="position:absolute;left:480px;top:279px;width:1px;height:182px;background:#000;"></div>
<div style="position:absolute;left:569px;top:279px;width:1px;height:182px;background:#000;"></div>
<div style="position:absolute;left:658px;top:279px;width:1px;height:182px;background:#000;"></div>
<div style="position:absolute;left:122px;top:279px;width:537px;height:1px;background:#000;"></div>
<div style="position:absolute;left:122px;top:299px;width:537px;height:1px;background:#000;"></div>
<div style="position:absolute;left:122px;top:319px;width:537px;height:1px;background:#000;"></div>
<div style="position:absolute;left:122px;top:339px;width:537px;height:1px;background:#000;"></div>
<div style="position:absolute;left:122px;top:359px;width:537px;height:1px;background:#000;"></div>
<div style="position:absolute;left:122px;top:379px;width:537px;height:1px;background:#000;"></div>
<div style="position:absolute;left:122px;top:399px;width:537px;height:1px;background:#000;"></div>
<div style="position:absolute;left:122px;top:419px;width:537px;height:1px;background:#000;"></div>
<div style="position:absolute;left:122px;top:439px;width:537px;height:1px;background:#000;"></div>
<div style="position:absolute;left:122px;top:460px;width:537px;height:1px;background:#000;"></div>
<span style="position:absolute;left:125.70px;top:285.02px;font-size:12.5px;line-height:12.5px;font-weight:700;color:#111;white-space:pre;transform:scaleX(1.0906);transform-origin:left;">№</span>
<span style="position:absolute;left:223.20px;top:285.02px;font-size:12.5px;line-height:12.5px;font-weight:700;color:#111;white-space:pre;transform:scaleX(1.0241);transform-origin:center;">ФИО</span>
<span style="position:absolute;left:325.30px;top:285.02px;font-size:12.5px;line-height:12.5px;font-weight:700;color:#111;white-space:pre;transform:scaleX(0.9674);transform-origin:center;">Ставка</span>
<span style="position:absolute;left:396.74px;top:285.02px;font-size:12.5px;line-height:12.5px;font-weight:700;color:#111;white-space:pre;transform:scaleX(1.0252);transform-origin:center;">Рабочие дни</span>
<span style="position:absolute;left:491.53px;top:285.02px;font-size:12.5px;line-height:12.5px;font-weight:700;color:#111;white-space:pre;transform:scaleX(1.0368);transform-origin:center;">Выходные</span>
<span style="position:absolute;left:583.43px;top:285.02px;font-size:12.5px;line-height:12.5px;font-weight:700;color:#111;white-space:pre;transform:scaleX(0.9821);transform-origin:center;">Зарплата</span>
<span style="position:absolute;left:163.91px;top:304.84px;font-size:12px;line-height:12px;font-weight:700;color:#111;white-space:pre;">1</span>
<span style="position:absolute;left:216.67px;top:304.84px;font-size:12px;line-height:12px;font-weight:400;color:#111;white-space:pre;transform:scaleX(1.0574);transform-origin:right;">Васильев В. В.</span>
<span style="position:absolute;left:361.60px;top:304.84px;font-size:12px;line-height:12px;font-weight:400;color:#111;white-space:pre;">1500</span>
<span style="position:absolute;left:464.24px;top:304.84px;font-size:12px;line-height:12px;font-weight:400;color:#111;white-space:pre;">25</span>
<span style="position:absolute;left:559.71px;top:304.84px;font-size:12px;line-height:12px;font-weight:400;color:#111;white-space:pre;">6</span>
<span style="position:absolute;left:621.92px;top:304.84px;font-size:12px;line-height:12px;font-weight:400;color:#111;white-space:pre;">37500</span>
<span style="position:absolute;left:163.91px;top:324.84px;font-size:12px;line-height:12px;font-weight:700;color:#111;white-space:pre;">2</span>
<span style="position:absolute;left:220.32px;top:324.84px;font-size:12px;line-height:12px;font-weight:400;color:#111;white-space:pre;transform:scaleX(1.1263);transform-origin:right;">Григорьев Г. Г.</span>
<span style="position:absolute;left:361.60px;top:324.84px;font-size:12px;line-height:12px;font-weight:400;color:#111;white-space:pre;">1650</span>
<span style="position:absolute;left:464.24px;top:324.84px;font-size:12px;line-height:12px;font-weight:400;color:#111;white-space:pre;">24</span>
<span style="position:absolute;left:559.71px;top:324.84px;font-size:12px;line-height:12px;font-weight:400;color:#111;white-space:pre;">7</span>
<span style="position:absolute;left:621.92px;top:324.84px;font-size:12px;line-height:12px;font-weight:400;color:#111;white-space:pre;">39600</span>
<span style="position:absolute;left:163.91px;top:344.84px;font-size:12px;line-height:12px;font-weight:700;color:#111;white-space:pre;">3</span>
<span style="position:absolute;left:215.11px;top:344.84px;font-size:12px;line-height:12px;font-weight:400;color:#111;white-space:pre;transform:scaleX(1.1585);transform-origin:right;">Дмитриев Д. Д.</span>
<span style="position:absolute;left:361.60px;top:344.84px;font-size:12px;line-height:12px;font-weight:400;color:#111;white-space:pre;">1400</span>
<span style="position:absolute;left:464.24px;top:344.84px;font-size:12px;line-height:12px;font-weight:400;color:#111;white-space:pre;">26</span>
<span style="position:absolute;left:559.71px;top:344.84px;font-size:12px;line-height:12px;font-weight:400;color:#111;white-space:pre;">5</span>
<span style="position:absolute;left:621.92px;top:344.84px;font-size:12px;line-height:12px;font-weight:400;color:#111;white-space:pre;">36400</span>
<span style="position:absolute;left:163.91px;top:364.84px;font-size:12px;line-height:12px;font-weight:700;color:#111;white-space:pre;">4</span>
<span style="position:absolute;left:235.17px;top:364.84px;font-size:12px;line-height:12px;font-weight:400;color:#111;white-space:pre;transform:scaleX(1.0336);transform-origin:right;">Егоров Е. Е</span>
<span style="position:absolute;left:361.60px;top:364.84px;font-size:12px;line-height:12px;font-weight:400;color:#111;white-space:pre;">1600</span>
<span style="position:absolute;left:464.24px;top:364.84px;font-size:12px;line-height:12px;font-weight:400;color:#111;white-space:pre;">24</span>
<span style="position:absolute;left:559.71px;top:364.84px;font-size:12px;line-height:12px;font-weight:400;color:#111;white-space:pre;">7</span>
<span style="position:absolute;left:621.92px;top:364.84px;font-size:12px;line-height:12px;font-weight:400;color:#111;white-space:pre;">38400</span>
<span style="position:absolute;left:163.91px;top:384.84px;font-size:12px;line-height:12px;font-weight:700;color:#111;white-space:pre;">5</span>
<span style="position:absolute;left:227.89px;top:384.84px;font-size:12px;line-height:12px;font-weight:400;color:#111;white-space:pre;transform:scaleX(1.1098);transform-origin:right;">Иванов И. И.</span>
<span style="position:absolute;left:361.60px;top:384.84px;font-size:12px;line-height:12px;font-weight:400;color:#111;white-space:pre;">1800</span>
<span style="position:absolute;left:464.24px;top:384.84px;font-size:12px;line-height:12px;font-weight:400;color:#111;white-space:pre;">23</span>
<span style="position:absolute;left:559.71px;top:384.84px;font-size:12px;line-height:12px;font-weight:400;color:#111;white-space:pre;">8</span>
<span style="position:absolute;left:621.92px;top:384.84px;font-size:12px;line-height:12px;font-weight:400;color:#111;white-space:pre;">41400</span>
<span style="position:absolute;left:163.91px;top:404.84px;font-size:12px;line-height:12px;font-weight:700;color:#111;white-space:pre;">6</span>
<span style="position:absolute;left:210.23px;top:404.84px;font-size:12px;line-height:12px;font-weight:400;color:#111;white-space:pre;transform:scaleX(1.1345);transform-origin:right;">Михайлов М. М.</span>
<span style="position:absolute;left:361.60px;top:404.84px;font-size:12px;line-height:12px;font-weight:400;color:#111;white-space:pre;">1450</span>
<span style="position:absolute;left:464.24px;top:404.84px;font-size:12px;line-height:12px;font-weight:400;color:#111;white-space:pre;">26</span>
<span style="position:absolute;left:559.71px;top:404.84px;font-size:12px;line-height:12px;font-weight:400;color:#111;white-space:pre;">5</span>
<span style="position:absolute;left:621.92px;top:404.84px;font-size:12px;line-height:12px;font-weight:400;color:#111;white-space:pre;">37700</span>
<span style="position:absolute;left:163.91px;top:424.84px;font-size:12px;line-height:12px;font-weight:700;color:#111;white-space:pre;">7</span>
<span style="position:absolute;left:228.98px;top:424.84px;font-size:12px;line-height:12px;font-weight:400;color:#111;white-space:pre;transform:scaleX(1.0817);transform-origin:right;">Петров П. П.</span>
<span style="position:absolute;left:361.60px;top:424.84px;font-size:12px;line-height:12px;font-weight:400;color:#111;white-space:pre;">1550</span>
<span style="position:absolute;left:464.24px;top:424.84px;font-size:12px;line-height:12px;font-weight:400;color:#111;white-space:pre;">25</span>
<span style="position:absolute;left:559.71px;top:424.84px;font-size:12px;line-height:12px;font-weight:400;color:#111;white-space:pre;">6</span>
<span style="position:absolute;left:621.92px;top:424.84px;font-size:12px;line-height:12px;font-weight:400;color:#111;white-space:pre;">38750</span>
<span style="position:absolute;left:124.40px;top:445.42px;font-size:12.5px;line-height:12.5px;font-weight:700;color:#111;white-space:pre;transform:scaleX(1.1092);transform-origin:left;">Сумма</span>
<div style="position:absolute;left:990px;top:241px;width:19px;height:304px;background:#e6e6e6;"></div>
<div style="position:absolute;left:993px;top:242px;width:15px;height:15px;background:#fff;border:1px solid #b7c6bd;box-sizing:border-box;"></div>
<svg style="position:absolute;left:996px;top:247px;" width="9" height="5" viewBox="0 0 9 5"><path d="M0.5 4.5 L4.5 0.5 L8.5 4.5 Z" fill="#666"/></svg>
<div style="position:absolute;left:993px;top:257px;width:15px;height:191px;background:#fff;border:1px solid #b7c6bd;box-sizing:border-box;"></div>
<div style="position:absolute;left:994px;top:448px;width:13px;height:84px;background:#d4d4d4;"></div>
<div style="position:absolute;left:993px;top:532px;width:15px;height:14px;background:#fff;border:1px solid #b7c6bd;box-sizing:border-box;"></div>
<svg style="position:absolute;left:996px;top:537px;" width="9" height="5" viewBox="0 0 9 5"><path d="M0.5 0.5 L4.5 4.5 L8.5 0.5 Z" fill="#666"/></svg>
<div style="position:absolute;left:33px;top:545px;width:977px;height:1px;background:#a6a6a6;"></div>
<div style="position:absolute;left:33px;top:573px;width:977px;height:1px;background:#c8c8c8;"></div>
<svg style="position:absolute;left:59px;top:555px;" width="6" height="8" viewBox="0 0 6 8"><path d="M5 0.5 V7.5 L0.5 4 Z" fill="#b9b9b9"/></svg>
<svg style="position:absolute;left:89px;top:555px;" width="6" height="8" viewBox="0 0 6 8"><path d="M0.5 0.5 V7.5 L5 4 Z" fill="#b9b9b9"/></svg>
<div style="position:absolute;left:133px;top:545px;width:60px;height:25px;background:#fff;border-left:1px solid #a6a6a6;border-right:1px solid #a6a6a6;box-sizing:border-box;"></div>
<div style="position:absolute;left:134px;top:568px;width:58px;height:2px;background:#217346;"></div>
<span style="position:absolute;left:144.80px;top:552.42px;font-size:12.5px;line-height:12.5px;font-weight:700;color:#284a36;white-space:pre;transform:scaleX(0.9621);transform-origin:left;">Лист1</span>
<svg style="position:absolute;left:226px;top:551px;" width="17" height="17" viewBox="0 0 17 17"><circle cx="8.5" cy="8.5" r="7.4" stroke="#777" stroke-width="1.3" fill="none"/><path d="M8.5 4.5 V12.5 M4.5 8.5 H12.5" stroke="#777" stroke-width="1.8"/></svg>
<div style="position:absolute;left:620px;top:555px;width:1.5px;height:1.5px;background:#8aa595;"></div>
<div style="position:absolute;left:620px;top:559px;width:1.5px;height:1.5px;background:#8aa595;"></div>
<div style="position:absolute;left:620px;top:563px;width:1.5px;height:1.5px;background:#8aa595;"></div>
<div style="position:absolute;left:637px;top:552px;width:15px;height:15px;background:#fff;border:1px solid #b7c6bd;box-sizing:border-box;"></div>
<svg style="position:absolute;left:641px;top:555px;" width="6" height="9" viewBox="0 0 6 9"><path d="M5 0.5 V8 L0.5 4.25 Z" fill="#666"/></svg>
<div style="position:absolute;left:652px;top:552px;width:296px;height:15px;background:#fff;border:1px solid #b7c6bd;box-sizing:border-box;"></div>
<div style="position:absolute;left:948px;top:553px;width:29px;height:13px;background:#d4d4d4;"></div>
<div style="position:absolute;left:977px;top:552px;width:15px;height:15px;background:#fff;border:1px solid #b7c6bd;box-sizing:border-box;"></div>
<svg style="position:absolute;left:982px;top:555px;" width="6" height="9" viewBox="0 0 6 9"><path d="M0.5 0.5 V8 L5 4.25 Z" fill="#666"/></svg>
<div style="position:absolute;left:711px;top:574px;width:38px;height:21px;background:#c8c8c8;"></div>
<svg style="position:absolute;left:723px;top:577px;" width="14" height="14" viewBox="0 0 14 14"><path d="M0.5 0.5 H13.5 V13.5 H0.5 Z M0.5 4.8 H13.5 M0.5 9.2 H13.5 M4.8 0.5 V13.5 M9.2 0.5 V13.5" stroke="#555" stroke-width="1" fill="none"/></svg>
<svg style="position:absolute;left:761px;top:577px;" width="15" height="14" viewBox="0 0 15 14"><path d="M0.5 0.5 H13.5 V13.5 H0.5 Z" stroke="#555" fill="none"/><path d="M3.5 3.5 H10.5 V10.5 H3.5 Z M5 5.5 H9 M5 7.5 H9 M5 9 H9" stroke="#555" stroke-width="0.9" fill="none"/></svg>
<svg style="position:absolute;left:799px;top:577px;" width="15" height="14" viewBox="0 0 15 14"><path d="M0.5 13.5 V0.5 H13.5 V13.5 M0.5 8.5 H8.5 V0.5 M4.5 0.5 V5" stroke="#555" fill="none"/></svg>
<div style="position:absolute;left:830px;top:583px;width:6px;height:2px;background:#555;"></div>
<div style="position:absolute;left:840px;top:584px;width:100px;height:1px;background:#a8b4ae;"></div>
<div style="position:absolute;left:888px;top:578px;width:5px;height:11px;background:#6a6a6a;"></div>
<svg style="position:absolute;left:943px;top:579px;" width="8" height="9" viewBox="0 0 8 9"><path d="M4 0.5 V8.5 M0 4.5 H8" stroke="#555" stroke-width="1.7"/></svg>
<span style="position:absolute;left:963.00px;top:577.27px;font-size:11.5px;line-height:11.5px;font-weight:400;color:#444;white-space:pre;transform:scaleX(0.8893);transform-origin:left;">100 %</span>
<div style="position:absolute;left:893px;top:100px;width:23px;height:23px;background:#c6c6c6;"></div>
<div style="position:absolute;left:916px;top:100px;width:12px;height:23px;background:#e9e9e9;"></div>
<svg style="position:absolute;left:897px;top:104px;" width="14" height="15" viewBox="0 0 14 15"><path d="M13 3 V1 H1.5 L7.5 7.5 L1.5 14 H13 V12" stroke="#444" stroke-width="1.2" fill="none"/></svg>
<svg style="position:absolute;left:918px;top:110px;" width="6" height="4" viewBox="0 0 6 4"><path d="M0 0 H5 L2.5 3 Z" fill="#555"/></svg>
<div style="position:absolute;left:89.3px;top:64.7px;width:72.3px;height:35px;box-sizing:border-box;border:3.4px solid #ff1c00;border-radius:9px;box-shadow:0 0 0 1.2px #fff, 2px 3px 3px 1px rgba(0,0,0,0.4), inset 0 0 0 1.2px #fff, inset 0 0 4px 1px rgba(0,0,0,0.3), inset 2px 3px 3px rgba(0,0,0,0.3);"></div>
<div style="position:absolute;left:882.9px;top:89.1px;width:50.2px;height:38.4px;box-sizing:border-box;border:3.4px solid #ff1c00;border-radius:7px;box-shadow:0 0 0 1.2px #fff, 2px 3px 3px 1px rgba(0,0,0,0.4), inset 0 0 0 1.2px #fff, inset 0 0 4px 1px rgba(0,0,0,0.3), inset 2px 3px 3px rgba(0,0,0,0.3);"></div>
<div style="position:absolute;left:101.5px;top:98.7px;width:46px;height:46px;border-radius:50%;background:radial-gradient(circle at 50% 50%, #f47f66 0%, #f36c52 35%, #f1563a 55%, #ef3a1e 70%, #ee2808 82%, #ec2000 100%);box-shadow:-1px 2px 2px rgba(0,0,0,0.3);"></div>
<div style="position:absolute;left:933.6px;top:86.69999999999999px;width:45.2px;height:45.2px;border-radius:50%;background:radial-gradient(circle at 50% 50%, #f47f66 0%, #f36c52 35%, #f1563a 55%, #ef3a1e 70%, #ee2808 82%, #ec2000 100%);box-shadow:-1px 2px 2px rgba(0,0,0,0.3);"></div>
<svg style="position:absolute;left:112px;top:102px;" width="24" height="36" viewBox="0 0 24 36"><path d="M17.2 6 V30.2 H10.6 V15.6 L5.6 17.4 V11 L13.2 6 Z" fill="#fff" stroke="#000" stroke-width="1.7" stroke-linejoin="round"/></svg>
<svg style="position:absolute;left:945px;top:96px;" width="20" height="27" viewBox="0 0 20 27"><path d="M1.8 8.2 V4.2 C3.3 1.9 6.3 1.2 9.6 1.2 C14.6 1.2 17.6 4 17.6 8 C17.6 11.9 15.2 14.6 10.3 19.5 H18.2 V25.8 H1.5 V21.2 L9.2 13.2 C11.2 11 11.7 9.8 11.7 8.3 C11.7 6.6 10.7 5.8 9.2 5.8 C6.8 5.8 4.3 6.9 1.8 8.2 Z" fill="#fff" stroke="#000" stroke-width="1.7" stroke-linejoin="round"/></svg>
<div style="position:absolute;left:877px;top:197px;width:100.7px;height:4.4px;border-radius:2.2px;background:#f45a32;box-shadow:0 0 0 1.3px #fff, 1px 2.5px 3px 1.5px rgba(0,0,0,0.4);"></div>
</div></body></html>
